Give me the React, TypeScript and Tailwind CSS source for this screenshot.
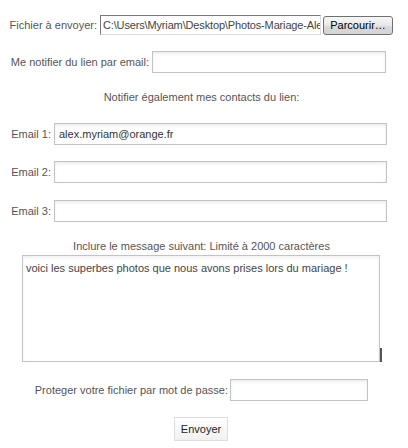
import React from 'react';

const inputCls =
  'h-[22px] border border-[#c3c3c3] bg-white shadow-[inset_0_2px_3px_rgba(0,0,0,0.07)] px-[4px] text-[11px] text-[#333] outline-none';

export default function App() {
  return (
    <div className="w-[408px] h-[448px] bg-white text-[11px] text-[#555] font-['Liberation_Sans',Arial,sans-serif] flex flex-col overflow-hidden">
      {/* fichier */}
      <div className="mt-[15px] h-[20px] flex items-center">
        <span className="w-[97px] text-right whitespace-nowrap">Fichier à envoyer:</span>
        <div className="ml-[3px] w-[221px] h-[20px] border border-[#7a7a7a] border-r-[#dcdcdc] border-b-[#dcdcdc] bg-white overflow-hidden whitespace-nowrap leading-[18px] pl-[2px] tracking-[-0.15px] text-[#444]">
          C:\Users\Myriam\Desktop\Photos-Mariage-Ale
        </div>
        <button className="ml-[2px] w-[70px] h-[19px] px-0 rounded-[3px] border border-[#707070] bg-[linear-gradient(#f6f6f6,#e8e8e8_50%,#dadada_51%,#d4d4d4)] text-[11px] text-black leading-none whitespace-nowrap">
          Parcourir…
        </button>
      </div>

      {/* notif */}
      <div className="mt-[16px] h-[22px] flex items-center">
        <span className="w-[149px] text-right whitespace-nowrap">Me notifier du lien par email:</span>
        <input className={`ml-[3px] w-[234px] ${inputCls}`} defaultValue="" />
      </div>

      <div className="mt-[17px] h-[14px] leading-[14px] w-[403px] text-center">
        Notifier également mes contacts du lien:
      </div>

      {[
        { n: 1, v: 'alex.myriam@orange.fr', mt: 'mt-[19px]' },
        { n: 2, v: '', mt: 'mt-[16px]' },
        { n: 3, v: '', mt: 'mt-[17px]' },
      ].map((r) => (
        <div key={r.n} className={`${r.mt} h-[22px] flex items-center`}>
          <span className="w-[51px] text-right whitespace-nowrap">Email {r.n}:</span>
          <input className={`ml-[3px] w-[333px] ${inputCls}`} defaultValue={r.v} />
        </div>
      ))}

      <div className="mt-[17px] h-[14px] leading-[14px] w-[403px] text-center">
        Inclure le message suivant: Limité à 2000 caractères
      </div>

      <div className="mt-[2px] flex items-end pl-[22px]">
        <textarea
          className="w-[358px] h-[107px] resize-none border border-[#c3c3c3] bg-white shadow-[inset_0_2px_3px_rgba(0,0,0,0.06)] px-[3px] py-[5px] text-[11px] leading-[14px] text-[#444] outline-none"
          defaultValue="voici les superbes photos que nous avons prises lors du mariage !"
        />
        <div className="w-[2px] h-[14px] bg-[#555]" />
      </div>

      <div className="mt-[17px] h-[22px] flex items-center">
        <span className="w-[228px] text-right whitespace-nowrap">Proteger votre fichier par mot de passe:</span>
        <input type="password" className={`ml-[2px] w-[138px] ${inputCls}`} />
      </div>

      <div className="mt-[16px] flex pl-[174px]">
        <button className="w-[54px] h-[24px] border border-[#dedede] bg-[linear-gradient(#ffffff,#f1f1f1)] text-[11px] text-[#222]">
          Envoyer
        </button>
      </div>
    </div>
  );
}
